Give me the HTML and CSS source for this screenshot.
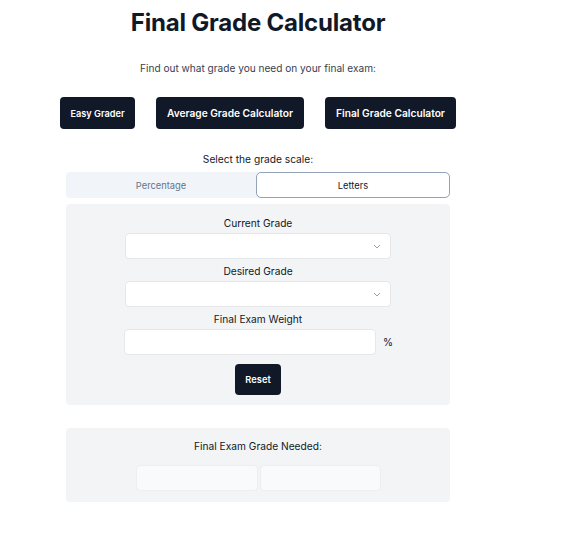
FILE: index.html
```html
<!DOCTYPE html>
<html>
<head>
<meta charset="utf-8">
<link rel="stylesheet" href="styles.css">
</head>
<body>
<div class="wrap">
  <h1 class="title">Final Grade Calculator</h1>
  <p class="sub">Find out what grade you need on your final exam:</p>
  <div class="nav">
    <button class="btn">Easy Grader</button>
    <button class="btn">Average Grade Calculator</button>
    <button class="btn">Final Grade Calculator</button>
  </div>
  <div class="inner">
    <p class="scale-label">Select the grade scale:</p>
    <div class="tabs">
      <div class="tab">Percentage</div>
      <div class="tab active">Letters</div>
    </div>
    <div class="panel form">
      <label class="lbl">Current Grade</label>
      <div class="select"><svg class="chev" width="8" height="5" viewBox="0 0 8 5"><path d="M1 1l3 3 3-3" fill="none" stroke="#9ca3af" stroke-width="1"/></svg></div>
      <label class="lbl">Desired Grade</label>
      <div class="select"><svg class="chev" width="8" height="5" viewBox="0 0 8 5"><path d="M1 1l3 3 3-3" fill="none" stroke="#9ca3af" stroke-width="1"/></svg></div>
      <label class="lbl">Final Exam Weight</label>
      <div class="weight-row">
        <div class="input"></div>
        <span class="pct">%</span>
      </div>
      <button class="btn reset">Reset</button>
    </div>
    <div class="panel result">
      <p class="res-label">Final Exam Grade Needed:</p>
      <div class="res-boxes">
        <div class="res-box"></div>
        <div class="res-box"></div>
      </div>
    </div>
  </div>
</div>
</body>
</html>
```
FILE: styles.css
```css
* { box-sizing: border-box; }
body {
  margin: 0;
  font-family: Inter, "Noto Sans", sans-serif;
  color: #111827;
  background: #fff;
}
.wrap {
  width: 396px;
  margin-left: 60px;
  padding-top: 8px;
}
.title {
  margin: 0;
  text-align: center;
  font-size: 24px;
  font-weight: 700;
  line-height: 30px;
  letter-spacing: -0.2px;
}
.sub {
  margin: 23px 0 0;
  text-align: center;
  font-size: 10.1px;
  line-height: 14px;
  color: #374151;
}
.nav {
  display: flex;
  justify-content: space-between;
  margin-top: 22px;
}
.btn {
  font-family: inherit;
  background: #111827;
  color: #fff;
  border: none;
  border-radius: 4px;
  height: 32px;
  font-size: 10.2px;
  font-weight: 600;
  padding: 0;
}
.nav .btn:nth-child(1) { width: 75px; font-size: 9.2px; }
.nav .btn:nth-child(2) { width: 148px; }
.nav .btn:nth-child(3) { width: 131px; }
.inner {
  margin: 0 6px;
}
.scale-label {
  margin: 23px 0 0;
  text-align: center;
  font-size: 10.2px;
  line-height: 14px;
}
.tabs {
  margin-top: 6px;
  display: grid;
  grid-template-columns: 190px 1fr;
  background: #f1f5f9;
  border-radius: 4px;
  height: 26px;
}
.tab {
  display: flex;
  align-items: center;
  justify-content: center;
  font-size: 9.3px;
  color: #64748b;
}
.tab.active {
  background: #fff;
  color: #0f172a;
  border: 1.5px solid #94a3b8;
  border-radius: 5px;
}
.panel {
  background: #f3f4f6;
  border-radius: 4px;
}
.form {
  margin-top: 6px;
  padding: 12px 0 10px;
  display: flex;
  flex-direction: column;
  align-items: center;
}
.lbl {
  font-size: 10.2px;
  line-height: 14px;
  margin-bottom: 3px;
}
.select {
  width: 266px;
  height: 26px;
  background: #fff;
  border: 1px solid #e5e7eb;
  border-radius: 4px;
  margin-bottom: 5px;
  display: flex;
  align-items: center;
  justify-content: flex-end;
  padding-right: 9px;
}
.weight-row {
  display: flex;
  align-items: center;
  margin-bottom: 9px;
}
.input {
  width: 252px;
  height: 26px;
  background: #fff;
  border: 1px solid #e5e7eb;
  border-radius: 4px;
}
.pct {
  font-size: 10.2px;
  margin-left: 7px;
  width: 9px;
}
.reset {
  width: 46px;
  height: 31px;
  font-size: 9.3px;
}
.result {
  margin-top: 23px;
  padding: 11px 0 11px;
  display: flex;
  flex-direction: column;
  align-items: center;
}
.res-label {
  margin: 0;
  font-size: 10.2px;
  line-height: 14px;
}
.res-boxes {
  margin-top: 12px;
  display: flex;
  gap: 2px;
}
.res-box {
  width: 122px;
  height: 26px;
  background: #f9fafb;
  border: 1px solid #eceef1;
  border-radius: 4px;
}
.res-box + .res-box { width: 121px; }
```
